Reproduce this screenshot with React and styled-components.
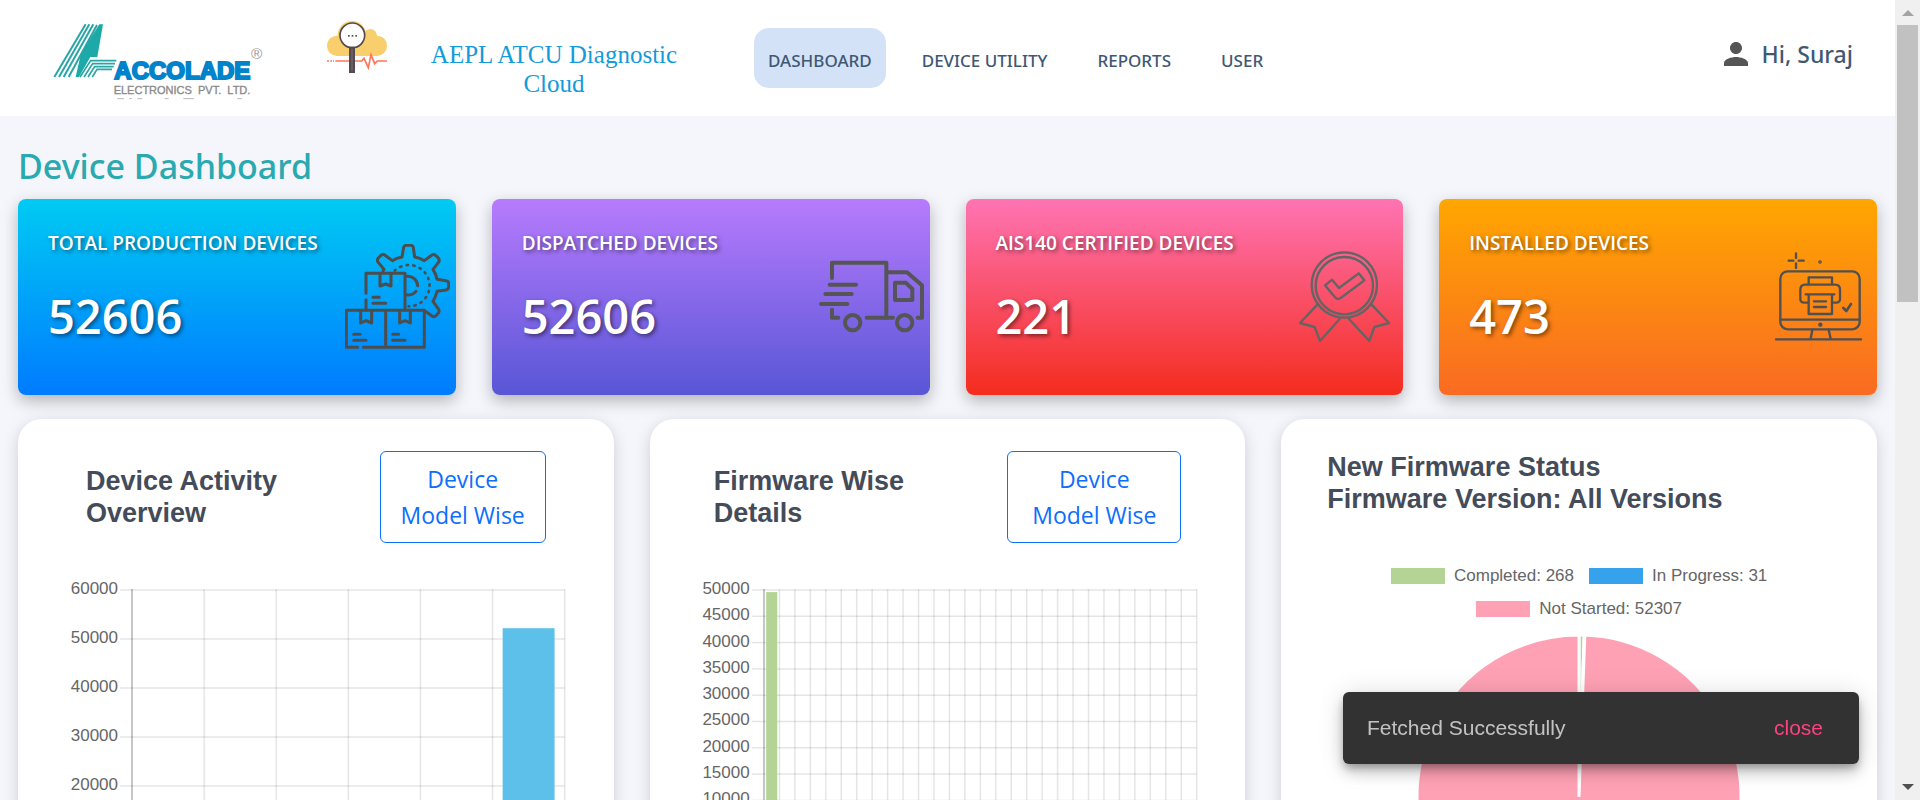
import React from "react";
import styled, { createGlobalStyle } from "styled-components";

const GlobalStyle = createGlobalStyle`
  *, *::before, *::after { box-sizing: border-box; }
  body {
    margin: 0;
    overflow: hidden;
    background: #f5f6fb;
    font-family: "Noto Sans", "Open Sans", sans-serif;
    color: #3b5270;
  }
`;

const Shell = styled.div`
  display: flex;
  height: 100vh;
`;

const Content = styled.div`
  flex: 1;
  min-width: 0;
  overflow-y: auto;
  scrollbar-width: none;
`;

/* ---------- header ---------- */

const Header = styled.header`
  display: flex;
  align-items: flex-start;
  min-height: 116px;
  padding: 20px 42px 12px 50px;
  background: #fff;
`;

const Brand = styled.a`
  display: flex;
  gap: 57px;
  margin-right: 32px;
  svg { display: block; }
`;

const ProductName = styled.div`
  width: 270px;
  margin-right: 65px;
  padding-top: 20px;
  text-align: center;
  font-family: "Liberation Serif", serif;
  font-size: 25px;
  line-height: 29px;
  color: #149bd9;
`;

const Nav = styled.nav`
  display: flex;
  gap: 22px;
  padding-top: 8px;
`;

const NavLink = styled.a`
  height: 60px;
  padding: 21px 14px 15px;
  border-radius: 15px;
  background: ${(p) => (p.$active ? "#d4e2f8" : "transparent")};
  color: #3f5874;
  font-size: 17px;
  font-weight: 500;
  line-height: 24px;
  text-decoration: none;
  white-space: nowrap;
`;

const UserButton = styled.button`
  display: flex;
  align-items: center;
  gap: 8px;
  margin-left: auto;
  padding: 16px 0 0;
  border: 0;
  background: none;
  color: #3f5874;
  font-family: inherit;
  font-size: 23px;
  font-weight: 500;
  line-height: 36px;
  white-space: nowrap;
  cursor: pointer;
`;

/* ---------- page ---------- */

const Main = styled.main`
  padding: 29px 18px 36px;
`;

const PageTitle = styled.h1`
  margin: 0 0 12px;
  font-size: 34px;
  font-weight: 500;
  line-height: 42px;
  color: #2aa9b0;
`;

const StatGrid = styled.section`
  display: grid;
  grid-template-columns: repeat(4, 1fr);
  gap: 36px;
  margin-bottom: 24px;
`;

const StatCard = styled.article`
  display: flex;
  align-items: center;
  justify-content: space-between;
  height: 196px;
  padding: 0 6px 2px 30px;
  border-radius: 8px;
  background: linear-gradient(180deg, ${(p) => p.$from}, ${(p) => p.$to});
  box-shadow: 0 6px 16px rgba(0, 0, 0, 0.27);
  color: #fff;
  font-family: "Open Sans", sans-serif;
  text-shadow: 2px 2px 4px rgba(0, 0, 0, 0.5);
  svg { flex: none; display: block; }
`;

const StatText = styled.div`
  align-self: stretch;
  padding-top: 29px;
`;

const StatLabel = styled.h2`
  margin: 0 0 30px;
  font-size: 19px;
  font-weight: 600;
  line-height: 30px;
  white-space: nowrap;
`;

const StatValue = styled.p`
  margin: 0;
  font-size: 47px;
  font-weight: 600;
  line-height: 56px;
`;

const PanelGrid = styled.section`
  display: grid;
  grid-template-columns: repeat(3, 1fr);
  gap: 36px;
`;

const Panel = styled.article`
  min-height: 560px;
  padding-top: 32px;
  border-radius: 24px;
  background: #fff;
  box-shadow: 0 4px 16px rgba(0, 0, 0, 0.16);
`;

const PanelHead = styled.div`
  display: flex;
  align-items: center;
  justify-content: space-between;
  padding: 0 ${(p) => p.$inset}px;
  margin-bottom: ${(p) => p.$gap}px;
`;

const PanelTitle = styled.h2`
  max-width: ${(p) => (p.$wide ? "none" : "210px")};
  margin: 0;
  font-family: "Liberation Sans", sans-serif;
  font-size: 27px;
  font-weight: 700;
  line-height: 32px;
  color: #444b59;
`;

const OutlineButton = styled.button`
  width: ${(p) => p.$width}px;
  padding: 9px 18px;
  border: 1px solid #0d6efd;
  border-radius: 6px;
  background: #fff;
  color: #0d6efd;
  font-family: "Open Sans", sans-serif;
  font-size: 23px;
  line-height: 36px;
  cursor: pointer;
`;

/* ---------- charts ---------- */

const ChartRow = styled.div`
  display: flex;
  padding: 0 49px 60px 50px;
`;

const AxisLabels = styled.div`
  width: 50px;
  font-family: "Liberation Sans", sans-serif;
  font-size: 17px;
  line-height: 18px;
  text-align: right;
  color: #666;
`;

const AxisLabel = styled.div`
  height: ${(p) => p.$step}px;
`;

const Ticks = styled.svg`
  flex: none;
  width: 14px;
  margin-top: 9px;
`;

const Plot = styled.svg`
  flex: 1;
  min-width: 0;
  margin-top: 9px;
  overflow: visible;
`;

const Legend = styled.ul`
  display: flex;
  flex-wrap: wrap;
  justify-content: center;
  gap: 15px;
  max-width: 420px;
  margin: 0 auto 17px;
  padding: 0;
  list-style: none;
  font-family: "Liberation Sans", sans-serif;
  font-size: 17px;
  line-height: 18px;
  color: #666;
`;

const LegendItem = styled.li`
  display: flex;
  align-items: center;
  gap: 9px;
  &::before {
    content: "";
    width: 54px;
    height: 16px;
    background: ${(p) => p.$color};
  }
`;

const PieBox = styled.div`
  display: flex;
  justify-content: center;
`;

/* ---------- overlays ---------- */

const Toast = styled.div`
  position: fixed;
  right: 61px;
  bottom: 36px;
  display: flex;
  align-items: center;
  justify-content: space-between;
  width: 516px;
  height: 72px;
  padding: 0 36px 0 24px;
  border-radius: 6px;
  background: #323232;
  box-shadow: 0 5px 8px -2px rgba(0, 0, 0, 0.3), 0 9px 15px rgba(0, 0, 0, 0.16), 0 2px 27px rgba(0, 0, 0, 0.14);
  font-family: "Liberation Sans", sans-serif;
  font-size: 21px;
  color: rgba(255, 255, 255, 0.7);
`;

const ToastAction = styled.button`
  padding: 0;
  border: 0;
  background: none;
  color: #ff4081;
  font: inherit;
  cursor: pointer;
`;

const ScrollTrack = styled.div`
  display: flex;
  flex-direction: column;
  align-items: center;
  flex: none;
  width: 25px;
  padding: 10px 0;
  background: #f0f0f0;
`;

const Arrow = styled.span`
  border: 6px solid transparent;
  border-top-width: ${(p) => (p.$down ? "6px" : "0")};
  border-bottom-width: ${(p) => (p.$down ? "0" : "6px")};
  border-top-color: ${(p) => (p.$down ? "#505050" : "transparent")};
  border-bottom-color: ${(p) => (p.$down ? "transparent" : "#a3a3a3")};
`;

const Thumb = styled.div`
  width: 21px;
  height: 277px;
  margin: 9px 0 auto;
  background: #c1c1c1;
`;

/* ---------- drawings ---------- */

function AccoladeLogo() {
  return (
    <svg width="220" height="84" viewBox="150 60 660 252" role="img" aria-label="Accolade Electronics">
      <g fill="none" stroke="#2aa5a5" strokeWidth="6">
        <path d="M257 73 L163 231" />
        <path d="M268 73 L177 231" />
        <path d="M280 73 L191 231" />
        <path d="M291 75 L206 231" />
      </g>
      <path d="M298 73 H309 L292 171 H271 L237 231 H227 L243 160 Z" fill="#1ea9a9" />
      <g fill="none" stroke="#2aa5a5" strokeWidth="5">
        <path d="M240 231 L272 182 H349" />
        <path d="M252 231 L278 191 H345" />
        <path d="M264 231 L284 200 H341" />
        <path d="M277 231 L291 208 H336" />
      </g>
      <text x="343" y="238" fill="#0083cb" stroke="#0083cb" strokeWidth="6" fontFamily="Liberation Sans, sans-serif" fontWeight="700" fontSize="72">ACCOLADE</text>
      <text x="341" y="282" fill="#8a8a8a" stroke="#8a8a8a" strokeWidth="1" fontFamily="Liberation Sans, sans-serif" fontSize="33">
        ELECTRONICS&#160; PVT.&#160; LTD.
      </text>
      <text x="753" y="178" fill="#999" fontFamily="Liberation Sans, sans-serif" fontSize="46">®</text>
      <path d="M352 296 H372 M388 296 H396 M412 296 H426 M494 296 H506 M550 296 H582 M712 296 H726" stroke="#b8b8b8" strokeWidth="3" />
    </svg>
  );
}

function CloudLogo() {
  return (
    <svg width="60" height="54" viewBox="981 60 180 162" aria-hidden="true">
      <g fill="#f8cf6c">
        <circle cx="1056" cy="106" r="43" />
        <circle cx="1111" cy="107" r="20" />
        <rect x="981" y="107" width="180" height="61" rx="30" />
      </g>
      <path
        d="M981 183 H987 M991 183 H996 M999 183 H1002 M1006 183 H1085 L1092 175 L1105 203 L1113 164 L1124 191 L1132 183 H1161"
        fill="none"
        stroke="#ff7557"
        strokeWidth="5"
      />
      <circle cx="1057" cy="106" r="37" fill="#fff" stroke="#544a50" strokeWidth="5" />
      <g fill="#544a50">
        <rect x="1044" y="105" width="5" height="5" />
        <rect x="1055" y="105" width="5" height="5" />
        <rect x="1066" y="105" width="5" height="5" />
        <rect x="1047" y="140" width="18" height="79" />
      </g>
      <path d="M1056 147 V212" stroke="#75666c" strokeWidth="4" />
    </svg>
  );
}

function PersonIcon() {
  return (
    <svg width="36" height="36" viewBox="0 0 24 24" fill="#555" aria-hidden="true">
      <path d="M12 12c2.210 0 4-1.790 4-4s-1.790-4-4-4-4 1.790-4 4 1.790 4 4 4zm0 2c-2.670 0-8 1.340-8 4v2h16v-2c0-2.660-5.330-4-8-4z" />
    </svg>
  );
}

function IconFrame({ origin, width = 9, color = "#4d4d4d", children }) {
  return (
    <svg
      width="105"
      height="105"
      viewBox={`${origin} 162 315 315`}
      fill="none"
      stroke={color}
      strokeWidth={width}
      strokeLinecap="round"
      strokeLinejoin="round"
      aria-hidden="true"
    >
      {children}
    </svg>
  );
}

function ProductionIcon() {
  return (
    <IconFrame origin={1035}>
      <path d="M1149 243 L1152 238 L1133 215 Q1131 209 1135 204 L1143 196 Q1149 192 1154 195 L1177 212 Q1190 204 1206 201 L1211 172 Q1213 166 1219 166 H1232 Q1238 166 1240 172 L1244 201 Q1260 204 1273 212 L1296 195 Q1302 192 1307 196 L1315 204 Q1319 209 1317 215 L1299 238 Q1308 252 1311 268 L1338 272 Q1346 274 1346 280 V292 Q1346 298 1338 300 L1311 304 Q1308 320 1299 334 L1316 358 Q1319 364 1315 369 L1308 377 Q1302 382 1296 378 L1275 363" />
      <path d="M1184 242 A62 62 0 1 1 1226 349" strokeDasharray="4 16" strokeWidth="8" />
      <path d="M1220 259 A29 29 0 0 1 1253 287 M1248 304 A29 29 0 0 1 1220 314" />
      <path d="M1098 310 V250 H1215 V360 M1098 329 V360" />
      <path d="M1140 252 V288 L1157 282 L1173 288 V252" />
      <path d="M1119 322 H1138 M1119 340 H1157" />
      <path d="M1073 472 H1039 V361 H1273 V472 H1090 M1157 363 V470" />
      <path d="M1082 363 V399 L1098 392 L1115 399 V363 M1199 363 V399 L1215 392 L1231 399 V363" />
      <path d="M1061 433 H1080 M1061 451 H1098 M1178 433 H1196 M1178 451 H1215" />
    </IconFrame>
  );
}

function TruckIcon() {
  return (
    <IconFrame origin={1017} width={12} color="#555">
      <path d="M1056 264 V218 H1219 V383 M1049 284 H1128 M1036 312 H1115 M1023 342 H1102 M1056 359 V383 H1075" />
      <path d="M1160 383 H1239 M1222 247 H1281 L1326 286 V383 H1313" />
      <path d="M1245 278 H1277 L1297 297 V330 H1245 Z" />
      <circle cx="1118" cy="398" r="23" />
      <circle cx="1274" cy="398" r="23" />
    </IconFrame>
  );
}

function MedalIcon() {
  return (
    <IconFrame origin={1026} width={7} color="#646464">
      <circle cx="1183" cy="285" r="98" />
      <circle cx="1183" cy="287" r="86" />
      <path d="M1125 286 L1146 269 L1167 294 L1226 250 L1243 271 L1172 324 Q1163 330 1155 322 Z" />
      <path d="M1102 344 L1050 399 L1094 411 L1110 453 L1169 387 M1265 344 L1317 399 L1273 411 L1258 453 L1197 387" />
    </IconFrame>
  );
}

function InstalledIcon() {
  return (
    <IconFrame origin={1038} width={7} color="#505050">
      <path d="M1128 190 V204 M1128 220 V234 M1106 212 H1120 M1136 212 H1151" />
      <circle cx="1200" cy="216" r="2" />
      <rect x="1081" y="244" width="238" height="174" rx="22" />
      <path d="M1082 389 H1318 M1177 419 L1172 446 M1226 419 L1232 446 M1068 448 H1323" />
      <circle cx="1201" cy="404" r="3" fill="#505050" />
      <path d="M1166 282 V262 H1236 V282 M1164 338 H1153 Q1141 338 1141 327 V299 Q1141 284 1156 284 H1245 Q1260 284 1260 299 V327 Q1260 338 1248 338 H1238" />
      <path d="M1157 313 H1243 M1166 314 V372 H1236 V314 M1182 334 H1218 M1182 351 H1218" />
      <path d="M1270 354 L1279 363 L1293 342" strokeWidth="8" />
    </IconFrame>
  );
}

/* ---------- data ---------- */

const navItems = ["DASHBOARD", "DEVICE UTILITY", "REPORTS", "USER"];

const stats = [
  { label: "TOTAL PRODUCTION DEVICES", value: "52606", from: "#00cbf3", to: "#007bff", Icon: ProductionIcon },
  { label: "DISPATCHED DEVICES", value: "52606", from: "#b77bfd", to: "#5856d6", Icon: TruckIcon },
  { label: "AIS140 CERTIFIED DEVICES", value: "221", from: "#ff74b3", to: "#f42c1e", Icon: MedalIcon },
  { label: "INSTALLED DEVICES", value: "473", from: "#ffa600", to: "#f96b22", Icon: InstalledIcon },
];

const statuses = [
  { label: "Completed", count: 268, color: "#b4d496" },
  { label: "In Progress", count: 31, color: "#36a2eb" },
  { label: "Not Started", count: 52307, color: "#ffa1b5" },
];

function BarChart({ max, step, height, columns, bars, color, label }) {
  const rows = max / step;
  const rowHeight = height / rows;
  const col = 100 / columns;
  const values = Array.from({ length: rows + 1 }, (_, i) => max - i * step);
  const grid = "rgba(0,0,0,0.1)";
  return (
    <ChartRow>
      <AxisLabels>
        {values.map((v) => (
          <AxisLabel key={v} $step={rowHeight}>{v}</AxisLabel>
        ))}
      </AxisLabels>
      <Ticks height={height + 2} aria-hidden="true">
        {values.map((v, i) => (
          <line key={v} x1="2" x2="14" y1={i * rowHeight + 1} y2={i * rowHeight + 1} stroke={grid} strokeWidth="1.5" />
        ))}
      </Ticks>
      <Plot height={height + 2} role="img" aria-label={label}>
        {values.map((v, i) => (
          <line key={v} x1="0" x2="100%" y1={i * rowHeight + 1} y2={i * rowHeight + 1} stroke={grid} strokeWidth="1.5" />
        ))}
        {Array.from({ length: columns + 1 }, (_, i) => (
          <line
            key={i}
            x1={`${i * col}%`}
            x2={`${i * col}%`}
            y1="0"
            y2={height}
            stroke={i === 0 ? "rgba(0,0,0,0.3)" : grid}
            strokeWidth="1.5"
          />
        ))}
        {bars.map((b) => (
          <rect
            key={b.index}
            x={`${(b.index + 0.14) * col}%`}
            width={`${col * 0.72}%`}
            y={height - (b.value / max) * height + 1}
            height={(b.value / max) * height}
            fill={color}
          />
        ))}
      </Plot>
    </ChartRow>
  );
}

function StatusPie() {
  const total = statuses.reduce((sum, s) => sum + s.count, 0);
  const r = 162;
  let angle = 0;
  const point = (a) => `${r + r * Math.sin(a)} ${r - r * Math.cos(a)}`;
  return (
    <svg width={r * 2} height={r * 2} role="img" aria-label="Firmware status">
      {statuses.map((s) => {
        const start = angle;
        angle += (s.count / total) * Math.PI * 2;
        const large = angle - start > Math.PI ? 1 : 0;
        return (
          <path
            key={s.label}
            d={`M${r} ${r} L${point(start)} A${r} ${r} 0 ${large} 1 ${point(angle)} Z`}
            fill={s.color}
            stroke="#fff"
            strokeWidth="3"
            strokeLinejoin="bevel"
          />
        );
      })}
    </svg>
  );
}

export default function App() {
  return (
    <>
      <GlobalStyle />
      <Shell>
        <Content>
          <Header>
            <Brand href="#home" aria-label="Home">
              <AccoladeLogo />
              <CloudLogo />
            </Brand>
            <ProductName>AEPL ATCU Diagnostic Cloud</ProductName>
            <Nav>
              {navItems.map((item, i) => (
                <NavLink key={item} href="#nav" $active={i === 0}>{item}</NavLink>
              ))}
            </Nav>
            <UserButton type="button">
              <PersonIcon />
              Hi, Suraj
            </UserButton>
          </Header>

          <Main>
            <PageTitle>Device Dashboard</PageTitle>

            <StatGrid>
              {stats.map(({ label, value, from, to, Icon }) => (
                <StatCard key={label} $from={from} $to={to}>
                  <StatText>
                    <StatLabel>{label}</StatLabel>
                    <StatValue>{value}</StatValue>
                  </StatText>
                  <Icon />
                </StatCard>
              ))}
            </StatGrid>

            <PanelGrid>
              <Panel>
                <PanelHead $inset={68} $gap={37}>
                  <PanelTitle>Device Activity Overview</PanelTitle>
                  <OutlineButton type="button" $width={166}>Device Model Wise</OutlineButton>
                </PanelHead>
                <BarChart
                  max={60000}
                  step={10000}
                  height={294}
                  columns={6}
                  bars={[{ index: 5, value: 52200 }]}
                  color="#5dc0ea"
                  label="Device activity"
                />
              </Panel>

              <Panel>
                <PanelHead $inset={64} $gap={37}>
                  <PanelTitle>Firmware Wise Details</PanelTitle>
                  <OutlineButton type="button" $width={174}>Device Model Wise</OutlineButton>
                </PanelHead>
                <BarChart
                  max={50000}
                  step={5000}
                  height={263}
                  columns={28}
                  bars={[{ index: 0, value: 49600 }]}
                  color="#b4d496"
                  label="Devices by firmware"
                />
              </Panel>

              <Panel>
                <PanelHead $inset={46} $gap={52}>
                  <PanelTitle $wide>
                    New Firmware Status
                    <br />
                    Firmware Version: All Versions
                  </PanelTitle>
                </PanelHead>
                <Legend>
                  {statuses.map((s) => (
                    <LegendItem key={s.label} $color={s.color}>{`${s.label}: ${s.count}`}</LegendItem>
                  ))}
                </Legend>
                <PieBox>
                  <StatusPie />
                </PieBox>
              </Panel>
            </PanelGrid>
          </Main>
        </Content>

        <ScrollTrack aria-hidden="true">
          <Arrow />
          <Thumb />
          <Arrow $down />
        </ScrollTrack>
      </Shell>

      <Toast role="status">
        Fetched Successfully
        <ToastAction type="button">close</ToastAction>
      </Toast>
    </>
  );
}
